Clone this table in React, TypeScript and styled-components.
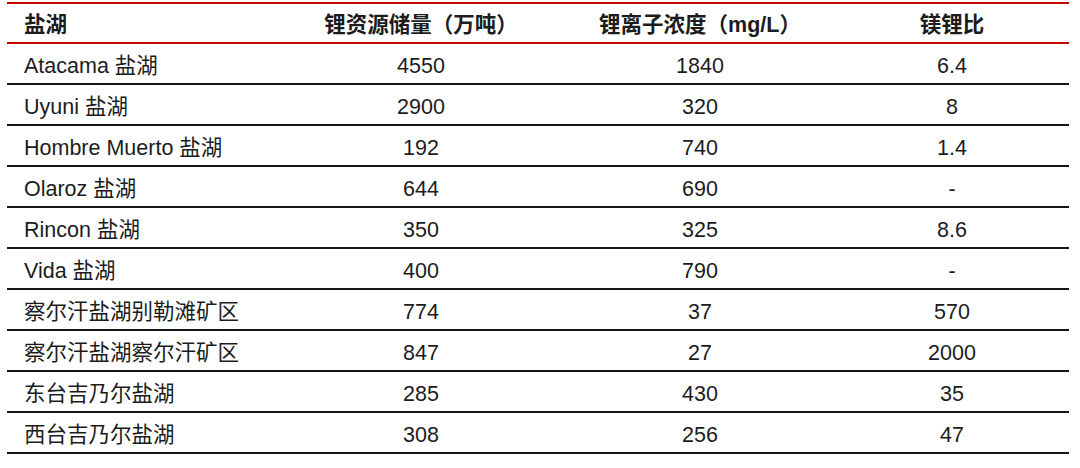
import styled, { createGlobalStyle } from "styled-components"

const GlobalStyle = createGlobalStyle`
	html, body {
		margin: 0;
		padding: 0;
		background: #ffffff;
	}
	body {
		font-family: "Liberation Sans", Arial, "Noto Sans CJK SC", sans-serif;
		color: #1c1c1c;
	}
`

const Page = styled.div`
	width: 1080px;
	height: 468px;
	padding: 2px 0 0 7px;
	box-sizing: border-box;
`

const Table = styled.div`
	width: 1062px;
	display: grid;
	grid-template-columns: 270px 288px 270px 234px;
	border-top: 2px solid #c00000;
`

const Cell = styled.div<{ $head?: boolean; $first?: boolean }>`
	height: ${(p) => (p.$head ? 38 : 39)}px;
	display: flex;
	align-items: center;
	justify-content: ${(p) => (p.$first ? "flex-start" : "center")};
	padding-left: ${(p) => (p.$first ? 17 : 0)}px;
	border-bottom: 2px solid ${(p) => (p.$head ? "#c00000" : "#151515")};
	font-size: 21.5px;
	font-weight: ${(p) => (p.$head ? 700 : 400)};
	line-height: 1;
	white-space: nowrap;

	span {
		transform: translateY(3px);
	}
`

const headers = ["盐湖", "锂资源储量（万吨）", "锂离子浓度（mg/L）", "镁锂比"]

const rows: string[][] = [
	["Atacama 盐湖", "4550", "1840", "6.4"],
	["Uyuni 盐湖", "2900", "320", "8"],
	["Hombre Muerto 盐湖", "192", "740", "1.4"],
	["Olaroz 盐湖", "644", "690", "-"],
	["Rincon 盐湖", "350", "325", "8.6"],
	["Vida 盐湖", "400", "790", "-"],
	["察尔汗盐湖别勒滩矿区", "774", "37", "570"],
	["察尔汗盐湖察尔汗矿区", "847", "27", "2000"],
	["东台吉乃尔盐湖", "285", "430", "35"],
	["西台吉乃尔盐湖", "308", "256", "47"],
]

const App = () => {
	return (
		<Page>
			<GlobalStyle />
			<Table>
				{headers.map((h, i) => (
					<Cell key={h} $head $first={i === 0}>
						<span>{h}</span>
					</Cell>
				))}
				{rows.map((r) =>
					r.map((v, i) => (
						<Cell key={r[0] + i} $first={i === 0}>
							<span>{v}</span>
						</Cell>
					))
				)}
			</Table>
		</Page>
	)
}

export default App
